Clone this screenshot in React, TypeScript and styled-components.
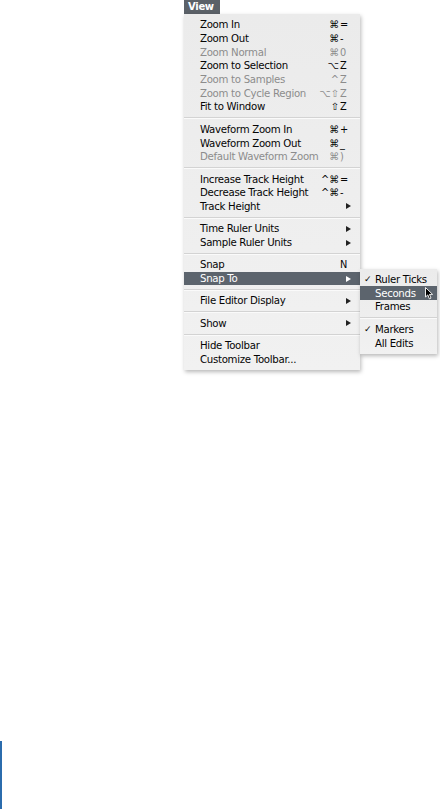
import React from 'react';
import styled, { createGlobalStyle } from 'styled-components';

const GlobalStyle = createGlobalStyle`
  html, body {
    margin: 0;
    padding: 0;
    background: #ffffff;
  }

  body {
    font-family: 'DejaVu Sans', 'Liberation Sans', sans-serif;
  }
`;

interface Item {
  label?: string;
  mods?: string;
  keyName?: string;
  arrow?: boolean;
  disabled?: boolean;
  active?: boolean;
  checked?: boolean;
  sep?: boolean;
}

const viewItems: Item[] = [
  { label: 'Zoom In', mods: '⌘', keyName: '=' },
  { label: 'Zoom Out', mods: '⌘', keyName: '-' },
  { label: 'Zoom Normal', mods: '⌘', keyName: '0', disabled: true },
  { label: 'Zoom to Selection', mods: '⌥', keyName: 'Z' },
  { label: 'Zoom to Samples', mods: '^', keyName: 'Z', disabled: true },
  { label: 'Zoom to Cycle Region', mods: '⌥⇧', keyName: 'Z', disabled: true },
  { label: 'Fit to Window', mods: '⇧', keyName: 'Z' },
  { sep: true },
  { label: 'Waveform Zoom In', mods: '⌘', keyName: '+' },
  { label: 'Waveform Zoom Out', mods: '⌘', keyName: '_' },
  { label: 'Default Waveform Zoom', mods: '⌘', keyName: ')', disabled: true },
  { sep: true },
  { label: 'Increase Track Height', mods: '^⌘', keyName: '=' },
  { label: 'Decrease Track Height', mods: '^⌘', keyName: '-' },
  { label: 'Track Height', arrow: true },
  { sep: true },
  { label: 'Time Ruler Units', arrow: true },
  { label: 'Sample Ruler Units', arrow: true },
  { sep: true },
  { label: 'Snap', keyName: 'N' },
  { label: 'Snap To', arrow: true, active: true },
  { sep: true },
  { label: 'File Editor Display', arrow: true },
  { sep: true },
  { label: 'Show', arrow: true },
  { sep: true },
  { label: 'Hide Toolbar' },
  { label: 'Customize Toolbar...' },
];

const snapItems: Item[] = [
  { label: 'Ruler Ticks', checked: true },
  { label: 'Seconds', active: true },
  { label: 'Frames' },
  { sep: true },
  { label: 'Markers', checked: true },
  { label: 'All Edits' },
];

const Page = styled.div`
  display: flex;
  flex-direction: column;
  height: 809px;
  overflow: hidden;
`;

const MenuArea = styled.div`
  display: flex;
  flex-direction: column;
  align-items: flex-start;
  padding-left: 184px;
`;

const MenuTitle = styled.div`
  background: #5b6168;
  color: #ffffff;
  font-size: 10px;
  font-weight: bold;
  letter-spacing: -0.3px;
  height: 14px;
  line-height: 14px;
  padding: 0 6px 0 4px;
  width: 26px;
`;

const Menu = styled.div<{ $width: number }>`
  background: linear-gradient(#ebebeb, #f1f1f1);
  box-shadow: 1px 2px 4px rgba(0, 0, 0, 0.28);
  padding: 4px 0;
  width: ${({ $width }) => $width}px;
  position: relative;
`;

const Row = styled.div<{ $active?: boolean; $disabled?: boolean; $indent: number }>`
  position: relative;
  display: grid;
  grid-template-columns: 1fr auto 11px;
  align-items: center;
  height: 13.7px;
  padding: 0 10px 0 ${({ $indent }) => $indent}px;
  font-size: 10.2px;
  letter-spacing: -0.3px;
  white-space: nowrap;
  color: ${({ $active, $disabled }) => ($active ? '#ffffff' : $disabled ? '#8c8c8c' : '#050505')};
  background: ${({ $active }) => ($active ? '#5c646d' : 'transparent')};
`;

const Label = styled.span`
  position: relative;
`;

const Check = styled.span`
  position: absolute;
  left: -11px;
  font-size: 9px;
`;

const Mods = styled.span`
  text-align: right;
  font-size: 9.8px;
  letter-spacing: 0;
`;

const Key = styled.span`
  padding-left: 1px;
  font-size: 9.8px;
  letter-spacing: 0;
`;

const Arrow = styled.span<{ $active?: boolean }>`
  justify-self: end;
  width: 0;
  height: 0;
  margin-right: -1px;
  border-top: 3.5px solid transparent;
  border-bottom: 3.5px solid transparent;
  border-left: 5px solid ${({ $active }) => ($active ? '#ffffff' : '#222222')};
`;

const Separator = styled.div`
  height: 1px;
  margin: 3.5px 0 3.2px;
  background: #d3d3d3;
  border-bottom: 1px solid #fafafa;
  box-sizing: content-box;
`;

const Submenu = styled(Menu)`
  position: absolute;
  left: 100%;
  top: -3px;
  z-index: 2;
  letter-spacing: normal;
`;

const Cursor = styled.svg`
  position: absolute;
  right: 3px;
  top: 1px;
`;

const SideBar = styled.div`
  margin-top: auto;
  width: 2px;
  height: 68px;
  background: #2b6cad;
`;

function MenuRows ({ items, indent, children }: { items: Item[]; indent: number; children?: React.ReactNode }) {
  return (
    <>
      {items.map((item, i) => item.sep
        ? <Separator key={i} />
        : (
          <Row
            $active={item.active}
            $disabled={item.disabled}
            $indent={indent}
            key={i}
          >
            <Label>
              {item.checked && <Check>✓</Check>}
              {item.label}
            </Label>
            <Mods>{item.mods}</Mods>
            {item.arrow ? <Arrow $active={item.active} /> : <Key>{item.keyName}</Key>}
            {item.active && children}
          </Row>
        ))}
    </>
  );
}

export default function App () {
  return (
    <Page>
      <GlobalStyle />
      <MenuArea>
        <MenuTitle>View</MenuTitle>
        <Menu $width={176}>
          <MenuRows
            indent={16}
            items={viewItems}
          >
            <Submenu $width={77}>
              <MenuRows
                indent={15}
                items={snapItems}
              >
                <Cursor
                  height='13'
                  viewBox='0 0 9 13'
                  width='9'
                >
                  <path
                    d='M0.5 0.5 L0.5 10 L2.8 7.9 L4.4 11.8 L6 11.1 L4.5 7.4 L7.6 7.4 Z'
                    fill='#000000'
                    stroke='#ffffff'
                    strokeWidth='0.9'
                  />
                </Cursor>
              </MenuRows>
            </Submenu>
          </MenuRows>
        </Menu>
      </MenuArea>
      <SideBar />
    </Page>
  );
}
